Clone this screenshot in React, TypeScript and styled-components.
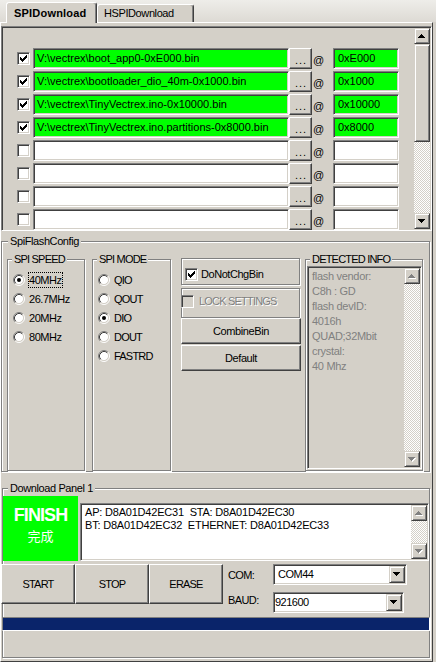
import React from "react";
import styled, { createGlobalStyle, css } from "styled-components";

const FACE = "#d4d0c8";

const GlobalStyle = createGlobalStyle`
  html, body { margin: 0; padding: 0; background: ${FACE}; }
  body {
    font-family: "Liberation Sans", Arial, sans-serif;
    font-size: 11px;
    color: #000;
    letter-spacing: -0.4px;
  }
  *, *::before, *::after { box-sizing: border-box; }
`;

const sunken = css`
  border: 1px solid;
  border-color: #808080 #ffffff #ffffff #808080;
  box-shadow: inset 1px 1px 0 #404040, inset -1px -1px 0 ${FACE};
  padding: 1px;
`;
const raised = css`
  border: 1px solid;
  border-color: #ffffff #404040 #404040 #ffffff;
  box-shadow: inset -1px -1px 0 #808080;
  background: ${FACE};
`;
const raisedScroll = css`
  border: 1px solid;
  border-color: ${FACE} #404040 #404040 ${FACE};
  box-shadow: inset 1px 1px 0 #ffffff, inset -1px -1px 0 #808080;
  background: ${FACE};
`;
const etched = css`
  border: 1px solid #808080;
  box-shadow: inset 1px 1px 0 #ffffff, 1px 1px 0 #ffffff;
`;

const Window = styled.div`
  width: 436px;
  height: 662px;
  display: flex;
  flex-direction: column;
  overflow: hidden;
`;

const TabStrip = styled.div`
  height: 22px;
  flex: none;
  display: flex;
  align-items: flex-end;
  padding-left: 6px;
  background: linear-gradient(#eeede9, #dddad4);
`;

const Tab = styled.div<{ $active?: boolean }>`
  position: relative;
  z-index: ${(p) => (p.$active ? 2 : 1)};
  width: ${(p) => (p.$active ? 91 : 97)}px;
  height: ${(p) => (p.$active ? 21 : 18)}px;
  margin-bottom: ${(p) => (p.$active ? -1 : 0)}px;
  padding: ${(p) => (p.$active ? "4px 0 0 7px" : "2px 0 0 6px")};
  border: 1px solid;
  border-bottom: 0;
  border-color: #ffffff #404040 transparent #ffffff;
  border-radius: 3px 3px 0 0;
  box-shadow: inset -1px 0 0 #808080;
  background: ${FACE};
  font-weight: ${(p) => (p.$active ? 700 : 400)};
  letter-spacing: ${(p) => (p.$active ? "0.2px" : "-0.4px")};
  line-height: 13px;
  white-space: nowrap;
`;

const TabPage = styled.div`
  width: 433px;
  flex: 1;
  border-top: 1px solid #ffffff;
  border-left: 1px solid #ffffff;
  border-right: 1px solid #404040;
  border-bottom: 1px solid #404040;
  display: flex;
  flex-direction: column;
`;

const FilePanel = styled.div`
  ${sunken}
  margin-top: 3px;
  height: 205px;
  flex: none;
  display: flex;
  background: ${FACE};
`;

const FileRows = styled.div`
  flex: 1;
  padding: 20px 0 0 14px;
  display: flex;
  flex-direction: column;
  gap: 2px;
`;

const FileRow = styled.div`
  height: 21px;
  display: flex;
  align-items: center;
`;

const Field = styled.div<{ $w: number; $filled?: boolean; $pad: number }>`
  ${sunken}
  width: ${(p) => p.$w}px;
  height: 21px;
  flex: none;
  padding: 1px 1px 1px ${(p) => p.$pad}px;
  background: ${(p) => (p.$filled ? "#00ff00" : "#ffffff")};
  display: flex;
  align-items: center;
  white-space: nowrap;
  overflow: hidden;
  letter-spacing: 0;
  line-height: 13px;
`;

const Gap = styled.span<{ $w: number }>`
  width: ${(p) => p.$w}px;
  flex: none;
`;

const DotsButton = styled.div`
  ${raised}
  width: 23px;
  height: 21px;
  flex: none;
  display: flex;
  align-items: center;
  justify-content: center;
  letter-spacing: 1px;
  padding: 2px 0 0 1px;
`;

const At = styled.span`
  width: 21px;
  flex: none;
  padding: 2px 0 0 1px;
  letter-spacing: 0;
`;

const VScroll = styled.div`
  width: 16px;
  flex: none;
  display: flex;
  flex-direction: column;
`;

const ScrollBtn = styled.div`
  ${raisedScroll}
  height: 16px;
  flex: none;
  display: flex;
  align-items: center;
  justify-content: center;
`;

const Thumb = styled.div<{ $h: number }>`
  ${raisedScroll}
  height: ${(p) => p.$h}px;
  flex: none;
`;

const Track = styled.div`
  flex: 1;
  background: repeating-conic-gradient(#ffffff 0 25%, ${FACE} 0 50%) 0 0 / 2px 2px;
`;

const Group = styled.div<{ $w: number; $h: number }>`
  ${etched}
  width: ${(p) => p.$w}px;
  height: ${(p) => p.$h}px;
  flex: none;
  display: flex;
  flex-direction: column;
`;

const Caption = styled.div<{ $x: number; $ls?: number }>`
  align-self: flex-start;
  margin: -7px 0 0 ${(p) => p.$x}px;
  padding: 0 2px;
  height: 12px;
  line-height: 12px;
  background: ${FACE};
  white-space: nowrap;
  letter-spacing: ${(p) => p.$ls ?? -0.4}px;
`;

const ConfigGroup = styled(Group)`
  margin-top: 10px;
`;

const ConfigRow = styled.div`
  display: flex;
  align-items: flex-start;
  margin: 12px 0 0 5px;
`;

const OptionGroup = styled(Group)<{ $ml: number }>`
  margin-left: ${(p) => p.$ml}px;
`;

const RadioList = styled.div`
  padding: 5px 0 0 5px;
  display: flex;
  flex-direction: column;
`;

const RadioRow = styled.div`
  height: 19px;
  display: flex;
  align-items: center;
`;

const RadioText = styled.span<{ $focus?: boolean; $ls: number }>`
  margin-left: 3px;
  border: 1px dotted ${(p) => (p.$focus ? "#000000" : "transparent")};
  line-height: 14px;
  letter-spacing: ${(p) => p.$ls}px;
`;

const SideColumn = styled.div`
  width: 120px;
  flex: none;
  margin: -1px 0 0 10px;
  display: flex;
  flex-direction: column;
`;

const Frame = styled.div<{ $h: number; $pt: number; $pl: number; $mt: number }>`
  ${etched}
  width: 119px;
  height: ${(p) => p.$h}px;
  margin-top: ${(p) => p.$mt}px;
  padding: ${(p) => p.$pt}px 0 0 ${(p) => p.$pl}px;
  display: flex;
  align-items: flex-start;
`;

const CheckRow = styled.div<{ $ml: number }>`
  display: flex;
  align-items: center;
  margin-left: ${(p) => p.$ml}px;
`;

const CheckText = styled.span<{ $disabled?: boolean; $gap: number }>`
  margin-left: ${(p) => p.$gap}px;
  line-height: 13px;
  white-space: nowrap;
  color: ${(p) => (p.$disabled ? "#808080" : "#000000")};
  text-shadow: ${(p) => (p.$disabled ? "1px 1px 0 #ffffff" : "none")};
  letter-spacing: ${(p) => (p.$disabled ? -0.8 : -0.45)}px;
`;

const ActionButton = styled.div<{ $mt: number }>`
  ${raised}
  width: 120px;
  height: 26px;
  margin-top: ${(p) => p.$mt}px;
  display: flex;
  align-items: center;
  justify-content: center;
  line-height: 13px;
`;

const InfoBox = styled.div`
  ${sunken}
  width: 115px;
  flex: 1;
  margin: 1px 0 1px 1px;
  display: flex;
  background: ${FACE};
`;

const InfoText = styled.div`
  flex: 1;
  padding: 1px 0 0 3px;
  line-height: 15px;
  color: #808080;
  white-space: pre;
  overflow: hidden;
  letter-spacing: -0.3px;
`;

const DownloadGroup = styled(Group)`
  margin: 16px 0 0 1px;
`;

const TopRow = styled.div`
  height: 65px;
  margin-top: 2px;
  display: flex;
  align-items: flex-end;
`;

const Finish = styled.div`
  width: 75px;
  height: 65px;
  flex: none;
  background: #00ff00;
  color: #ffffff;
  display: flex;
  flex-direction: column;
  align-items: center;
  padding-top: 9px;
`;

const FinishTitle = styled.div`
  font-size: 18px;
  font-weight: 700;
  line-height: 20px;
  letter-spacing: -0.9px;
`;

const FinishSub = styled.div`
  font-family: "Noto Sans CJK SC", "Liberation Sans", sans-serif;
  font-size: 13px;
  line-height: 16px;
  margin-top: 3px;
  letter-spacing: 0;
`;

const LogBox = styled.div`
  ${sunken}
  width: 349px;
  height: 58px;
  margin-left: 2px;
  display: flex;
  background: #ffffff;
`;

const LogText = styled.div`
  flex: 1;
  padding: 1px 0 0 3px;
  line-height: 13px;
  white-space: pre;
  letter-spacing: -0.2px;
  overflow: hidden;
`;

const ButtonRow = styled.div`
  height: 49px;
  margin: 3px 0 0 -2px;
  display: flex;
  align-items: flex-start;
`;

const BigButton = styled.div`
  ${raised}
  width: 74px;
  height: 40px;
  flex: none;
  display: flex;
  align-items: center;
  justify-content: center;
  letter-spacing: -0.8px;
`;

const PortGrid = styled.div`
  margin-left: 5px;
  display: grid;
  grid-template-columns: 45px auto;
  row-gap: 7px;
  align-items: center;
`;

const PortLabel = styled.span<{ $raise: number }>`
  margin-top: ${(p) => -p.$raise}px;
  letter-spacing: -0.6px;
`;

const Combo = styled.div<{ $w: number; $pad: number }>`
  ${sunken}
  width: ${(p) => p.$w}px;
  height: 21px;
  display: flex;
  align-items: center;
  background: #ffffff;
  padding-left: ${(p) => p.$pad}px;
  letter-spacing: -0.5px;
`;

const ComboValue = styled.span`
  flex: 1;
  line-height: 13px;
`;

const DropButton = styled.div`
  ${raisedScroll}
  width: 16px;
  height: 17px;
  flex: none;
  display: flex;
  align-items: center;
  justify-content: center;
`;

const Progress = styled.div`
  width: 428px;
  height: 14px;
  margin: 4px 0 0 -1px;
  border: 1px solid;
  border-color: #808080 #ffffff #ffffff #808080;
  display: flex;
`;

const ProgressFill = styled.div`
  background: #0a246a;
  height: 100%;
`;

const CheckBoxBox = styled.span<{ $disabled?: boolean }>`
  ${sunken}
  width: 13px;
  height: 13px;
  flex: none;
  padding: 1px;
  display: flex;
  background: ${(p) => (p.$disabled ? FACE : "#ffffff")};
`;

const CHECK_PATH =
  "M0 2h1v3h-1zM1 3h1v3h-1zM2 4h1v3h-1zM3 3h1v3h-1zM4 2h1v3h-1zM5 1h1v3h-1zM6 0h1v3h-1z";

function CheckBox({ checked, disabled }: { checked?: boolean; disabled?: boolean }) {
  return (
    <CheckBoxBox $disabled={disabled}>
      {checked && (
        <svg width="9" height="9" viewBox="0 0 9 9" shapeRendering="crispEdges">
          <path d={CHECK_PATH} transform="translate(1 1)" fill="#000" />
        </svg>
      )}
    </CheckBoxBox>
  );
}

function Radio({ checked }: { checked?: boolean }) {
  return (
    <svg width="12" height="12" viewBox="0 0 12 12" style={{ flex: "none" }}>
      <circle cx="6" cy="6" r="4.5" fill="#ffffff" />
      <path d="M2.11 9.89A5.5 5.5 0 0 1 9.89 2.11" stroke="#808080" fill="none" />
      <path d="M9.89 2.11A5.5 5.5 0 0 1 2.11 9.89" stroke="#ffffff" fill="none" />
      <path d="M2.82 9.18A4.5 4.5 0 0 1 9.18 2.82" stroke="#404040" fill="none" />
      <path d="M9.18 2.82A4.5 4.5 0 0 1 2.82 9.18" stroke={FACE} fill="none" />
      {checked && <circle cx="6" cy="6" r="2" fill="#000" />}
    </svg>
  );
}

const UP = "M3 0h1v1h-1zM2 1h3v1h-3zM1 2h5v1h-5zM0 3h7v1h-7z";
const DOWN = "M0 0h7v1h-7zM1 1h5v1h-5zM2 2h3v1h-3zM3 3h1v1h-1z";

function Arrow({ dir, disabled }: { dir: "up" | "down"; disabled?: boolean }) {
  const d = dir === "up" ? UP : DOWN;
  return (
    <svg width="8" height="5" viewBox="0 0 8 5" shapeRendering="crispEdges">
      {disabled && <path d={d} fill="#ffffff" transform="translate(1 1)" />}
      <path d={d} fill={disabled ? "#808080" : "#000000"} />
    </svg>
  );
}

function ScrollBar({ disabled, thumb }: { disabled?: boolean; thumb?: number }) {
  return (
    <VScroll>
      <ScrollBtn>
        <Arrow dir="up" disabled={disabled} />
      </ScrollBtn>
      {thumb ? <Thumb $h={thumb} /> : null}
      <Track />
      <ScrollBtn>
        <Arrow dir="down" disabled={disabled} />
      </ScrollBtn>
    </VScroll>
  );
}

const files = [
  { checked: true, path: "V:\\vectrex\\boot_app0-0xE000.bin", offset: "0xE000" },
  { checked: true, path: "V:\\vectrex\\bootloader_dio_40m-0x1000.bin", offset: "0x1000" },
  { checked: true, path: "V:\\vectrex\\TinyVectrex.ino-0x10000.bin", offset: "0x10000" },
  { checked: true, path: "V:\\vectrex\\TinyVectrex.ino.partitions-0x8000.bin", offset: "0x8000" },
  { checked: false, path: "", offset: "" },
  { checked: false, path: "", offset: "" },
  { checked: false, path: "", offset: "" },
  { checked: false, path: "", offset: "" },
];

const speeds = [
  { label: "40MHz", checked: true, focus: true },
  { label: "26.7MHz" },
  { label: "20MHz" },
  { label: "80MHz" },
];

const modes = [
  { label: "QIO" },
  { label: "QOUT" },
  { label: "DIO", checked: true },
  { label: "DOUT" },
  { label: "FASTRD" },
];

const info = ["flash vendor:", "C8h : GD", "flash devID:", "4016h", "QUAD;32Mbit", "crystal:", "40 Mhz"];

export default function App() {
  return (
    <>
      <GlobalStyle />
      <Window>
        <TabStrip>
          <Tab $active>SPIDownload</Tab>
          <Tab>HSPIDownload</Tab>
        </TabStrip>
        <TabPage>
          <FilePanel>
            <FileRows>
              {files.map((f, i) => (
                <FileRow key={i}>
                  <CheckBox checked={f.checked} />
                  <Gap $w={3} />
                  <Field $w={256} $pad={3} $filled={!!f.path}>
                    {f.path}
                  </Field>
                  <DotsButton>...</DotsButton>
                  <At>@</At>
                  <Field $w={66} $pad={4} $filled={!!f.offset}>
                    {f.offset}
                  </Field>
                </FileRow>
              ))}
            </FileRows>
            <ScrollBar thumb={98} />
          </FilePanel>

          <ConfigGroup $w={429} $h={231}>
            <Caption $x={6}>SpiFlashConfig</Caption>
            <ConfigRow>
              <OptionGroup $ml={0} $w={78} $h={212}>
                <Caption $x={4} $ls={-0.8}>SPI SPEED</Caption>
                <RadioList>
                  {speeds.map((s) => (
                    <RadioRow key={s.label}>
                      <Radio checked={s.checked} />
                      <RadioText $focus={s.focus} $ls={-0.45}>
                        {s.label}
                      </RadioText>
                    </RadioRow>
                  ))}
                </RadioList>
              </OptionGroup>
              <OptionGroup $ml={7} $w={79} $h={212}>
                <Caption $x={4} $ls={-0.8}>SPI MODE</Caption>
                <RadioList>
                  {modes.map((m) => (
                    <RadioRow key={m.label}>
                      <Radio checked={m.checked} />
                      <RadioText $ls={-0.8}>{m.label}</RadioText>
                    </RadioRow>
                  ))}
                </RadioList>
              </OptionGroup>
              <SideColumn>
                <Frame $h={27} $pt={9} $pl={3} $mt={0}>
                  <CheckRow $ml={0}>
                    <CheckBox checked />
                    <CheckText $gap={3}>DoNotChgBin</CheckText>
                  </CheckRow>
                </Frame>
                <Frame $h={30} $pt={6} $pl={0} $mt={3}>
                  <CheckRow $ml={-1}>
                    <CheckBox disabled />
                    <CheckText $gap={5} $disabled>
                      LOCK SETTINGS
                    </CheckText>
                  </CheckRow>
                </Frame>
                <ActionButton $mt={0}>CombineBin</ActionButton>
                <ActionButton $mt={1}>Default</ActionButton>
              </SideColumn>
              <OptionGroup $ml={4} $w={118} $h={212}>
                <Caption $x={4} $ls={-0.8}>DETECTED INFO</Caption>
                <InfoBox>
                  <InfoText>{info.join("\n")}</InfoText>
                  <ScrollBar disabled />
                </InfoBox>
              </OptionGroup>
            </ConfigRow>
          </ConfigGroup>

          <DownloadGroup $w={428} $h={170}>
            <Caption $x={5}>Download Panel 1</Caption>
            <TopRow>
              <Finish>
                <FinishTitle>FINISH</FinishTitle>
                <FinishSub>完成</FinishSub>
              </Finish>
              <LogBox>
                <LogText>
                  {"AP: D8A01D42EC31  STA: D8A01D42EC30\nBT: D8A01D42EC32  ETHERNET: D8A01D42EC33"}
                </LogText>
                <ScrollBar disabled />
              </LogBox>
            </TopRow>
            <ButtonRow>
              <BigButton>START</BigButton>
              <BigButton>STOP</BigButton>
              <BigButton>ERASE</BigButton>
              <PortGrid>
                <PortLabel $raise={0}>COM:</PortLabel>
                <Combo $w={134} $pad={4}>
                  <ComboValue>COM44</ComboValue>
                  <DropButton>
                    <Arrow dir="down" />
                  </DropButton>
                </Combo>
                <PortLabel $raise={5}>BAUD:</PortLabel>
                <Combo $w={131} $pad={1}>
                  <ComboValue>921600</ComboValue>
                  <DropButton>
                    <Arrow dir="down" />
                  </DropButton>
                </Combo>
              </PortGrid>
            </ButtonRow>
            <Progress>
              <ProgressFill style={{ width: "100%" }} />
            </Progress>
          </DownloadGroup>
        </TabPage>
      </Window>
    </>
  );
}
